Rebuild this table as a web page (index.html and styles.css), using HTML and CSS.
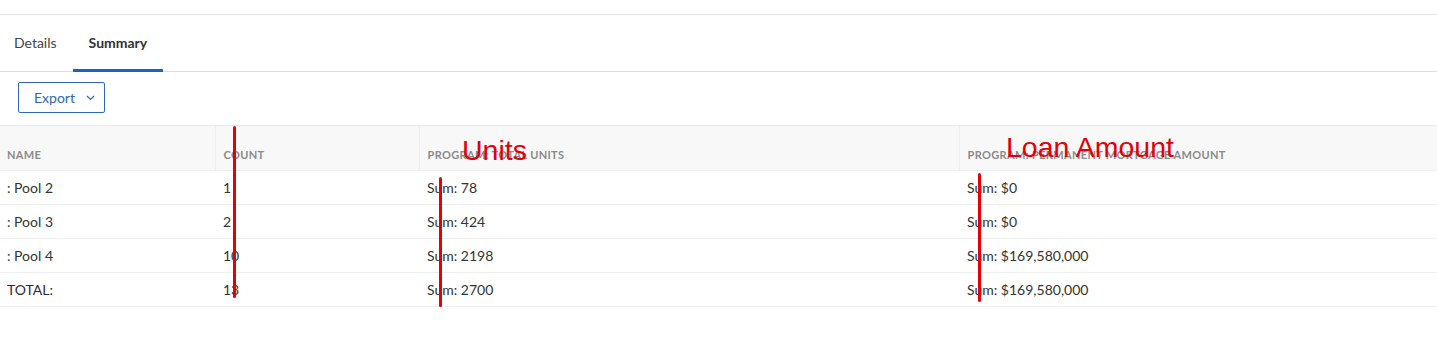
FILE: index.html
```html
<!DOCTYPE html>
<html>
<head>
<meta charset="utf-8">
<link rel="stylesheet" href="styles.css">
</head>
<body>
<div class="page">
  <div class="topbar"></div>
  <nav class="tabs">
    <div class="tab tab-first">Details</div>
    <div class="tab tab-active">Summary</div>
  </nav>
  <div class="toolbar">
    <button class="export">Export
      <svg class="chev" width="9" height="6" viewBox="0 0 9 6"><path d="M1 1 L4.5 4.5 L8 1" fill="none" stroke="#2f68b4" stroke-width="1.2"/></svg>
    </button>
  </div>
  <div class="table-wrap">
    <table class="summary">
      <thead>
        <tr>
          <th class="c1">Name</th>
          <th class="c2">Count</th>
          <th class="c3">Program: Total Units</th>
          <th class="c4">Program: Permanent Mortgage Amount</th>
        </tr>
      </thead>
      <tbody>
        <tr><td>: Pool 2</td><td>1</td><td>Sum: 78</td><td>Sum: $0</td></tr>
        <tr><td>: Pool 3</td><td>2</td><td>Sum: 424</td><td>Sum: $0</td></tr>
        <tr><td>: Pool 4</td><td>10</td><td>Sum: 2198</td><td>Sum: $169,580,000</td></tr>
        <tr><td class="total">TOTAL:</td><td>13</td><td>Sum: 2700</td><td>Sum: $169,580,000</td></tr>
      </tbody>
    </table>
    <div class="mark line1"></div>
    <div class="mark line2"></div>
    <div class="mark line3"></div>
    <div class="note note-units">Units</div>
    <div class="note note-loan">Loan Amount</div>
  </div>
</div>
</body>
</html>
```

FILE: styles.css
```css
* { box-sizing: border-box; }
html, body { margin: 0; padding: 0; background: #fff; }
body {
  font-family: Lato, "Open Sans", Arial, sans-serif;
  color: #333;
  width: 1437px;
  height: 364px;
  overflow: hidden;
}
.page { position: relative; }
.topbar {
  height: 15px;
  border-bottom: 1px solid #e6e6e6;
}
.tabs {
  display: flex;
  height: 57px;
  border-bottom: 1px solid #dddddd;
}
.tab {
  display: flex;
  align-items: center;
  font-size: 14px;
  color: #444;
  padding: 0 16px;
  border-bottom: 3px solid transparent;
  margin-bottom: -1px;
}
.tab-first { padding-left: 14px; padding-right: 16px; }
.tab-active {
  font-weight: bold;
  color: #333;
  border-bottom-color: #1466c6;
}
.toolbar {
  height: 53px;
  padding: 10px 0 0 18px;
}
.export {
  display: flex;
  align-items: center;
  gap: 11px;
  height: 31px;
  width: 87px;
  padding: 0 0 0 15px;
  background: #fff;
  border: 1px solid #2f68b4;
  border-radius: 2px;
  color: #2f68b4;
  font-family: inherit;
  font-size: 14px;
}
.chev { margin-top: 1px; }
.table-wrap { position: relative; }
.summary {
  border-collapse: collapse;
  width: 1437px;
  table-layout: fixed;
}
.summary th {
  background: #f8f8f8;
  border-top: 1px solid #e8e8e8;
  border-left: 1px solid #eeeeee;
  height: 45px;
  vertical-align: bottom;
  padding: 0 8px 9px;
  text-align: left;
  font-size: 11px;
  font-weight: bold;
  text-transform: uppercase;
  color: #8a8a8a;
  line-height: 12px;
  letter-spacing: 0.35px;
}
.summary th.c1 { border-left: none; padding-left: 7px; }
.c1 { width: 215px; }
.c2 { width: 204px; }
.c3 { width: 540px; }
.c4 { width: 478px; }
.summary td {
  height: 34px;
  padding: 0 8px;
  font-size: 14px;
  color: #333;
  border-top: 1px solid #eeeeee;
  border-bottom: 1px solid #eeeeee;
  vertical-align: middle;
}
.summary td:first-child { padding-left: 7px; }
.summary td.total { color: #2f2a3a; }
.mark {
  position: absolute;
  width: 3px;
  background: #e3000b;
  border-radius: 2px;
}
.line1 { left: 233px; top: 1px; height: 172px; }
.line2 { left: 439px; top: 52px; height: 130px; }
.line3 { left: 978px; top: 48px; height: 129px; }
.note {
  position: absolute;
  font-family: "Liberation Sans", Arial, sans-serif;
  font-size: 28.5px;
  line-height: 28px;
  color: #e3000b;
}
.note-units { left: 462px; top: 11px; }
.note-loan { left: 1006px; top: 8px; }
```
